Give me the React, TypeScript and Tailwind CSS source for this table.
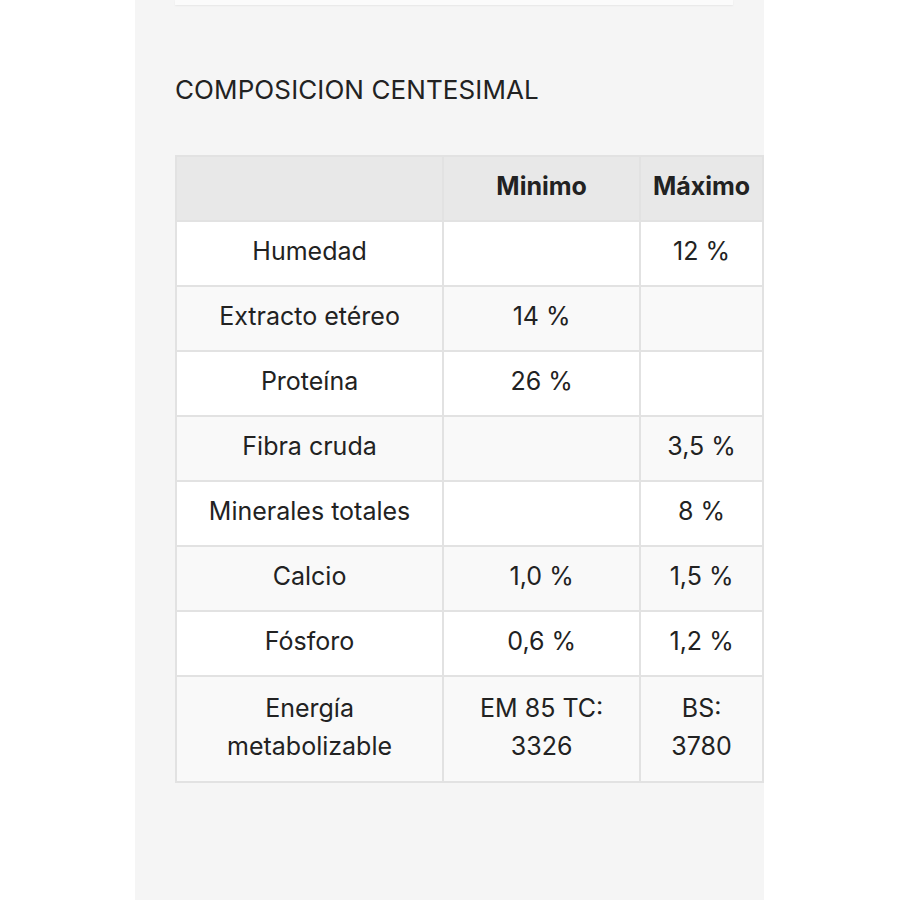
import React from "react";

const rows: [string, string, string][] = [
  ["Humedad", "", "12 %"],
  ["Extracto etéreo", "14 %", ""],
  ["Proteína", "26 %", ""],
  ["Fibra cruda", "", "3,5 %"],
  ["Minerales totales", "", "8 %"],
  ["Calcio", "1,0 %", "1,5 %"],
  ["Fósforo", "0,6 %", "1,2 %"],
];

export default function App() {
  return (
    <div className="min-h-[900px] w-[900px] bg-white" style={{ fontFamily: "Inter, 'Open Sans', sans-serif" }}>
      <div className="ml-[135px] w-[629px] min-h-[900px] bg-[#f5f5f5] pl-[40px] flex flex-col">
        <div className="h-[5px] w-[558px] bg-[#fbfbfb] shadow-[0_1px_2px_rgba(0,0,0,0.06)]" />
        <h2 className="mt-[68px] text-[26px] leading-[34px] text-[#222] tracking-[0.1px]">COMPOSICION CENTESIMAL</h2>
        <table className="mt-[48px] w-[589px] border-collapse text-[25px] leading-[38px] text-[#222] text-center">
          <colgroup>
            <col className="w-[268px]" />
            <col className="w-[198px]" />
            <col className="w-[123px]" />
          </colgroup>
          <thead>
            <tr className="bg-[#e8e8e8] h-[65px]">
              <th className="border-2 border-[#e2e2e2] pb-[5px]" />
              <th className="border-2 border-[#e2e2e2] font-bold pb-[5px]">Minimo</th>
              <th className="border-2 border-[#e2e2e2] font-bold pb-[5px]">Máximo</th>
            </tr>
          </thead>
          <tbody>
            {rows.map((r, i) => (
              <tr key={r[0]} className={i % 2 === 0 ? "bg-white h-[65px]" : "bg-[#f9f9f9] h-[65px]"}>
                <td className="border-2 border-[#e2e2e2] pb-[5px]">{r[0]}</td>
                <td className="border-2 border-[#e2e2e2] pb-[5px]">{r[1]}</td>
                <td className="border-2 border-[#e2e2e2] pb-[5px]">{r[2]}</td>
              </tr>
            ))}
            <tr className="bg-[#f9f9f9]">
              <td className="border-2 border-[#e2e2e2] pt-[12px] pb-[16px]">Energía<br />metabolizable</td>
              <td className="border-2 border-[#e2e2e2] pt-[12px] pb-[16px]">EM 85 TC:<br />3326</td>
              <td className="border-2 border-[#e2e2e2] pt-[12px] pb-[16px]">BS:<br />3780</td>
            </tr>
          </tbody>
        </table>
      </div>
    </div>
  );
}
